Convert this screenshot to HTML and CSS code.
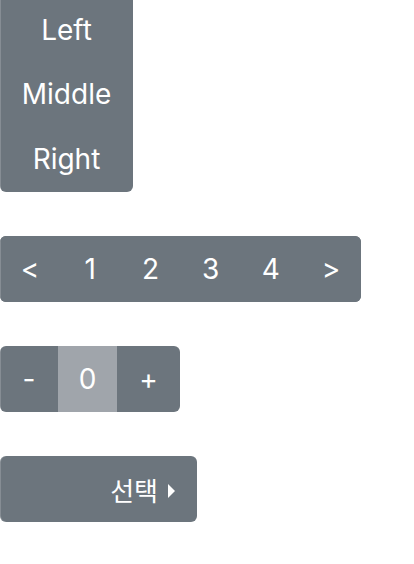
FILE: index.html
```html
<!DOCTYPE html>
<html lang="ko">
<head>
<meta charset="utf-8">
<title>Buttons</title>
<link rel="stylesheet" href="styles.css">
</head>
<body>
<main class="page">
  <div class="vgroup">
    <button class="btn vbtn">Left</button>
    <button class="btn vbtn">Middle</button>
    <button class="btn vbtn">Right</button>
  </div>

  <div class="pager">
    <button class="btn pbtn">&lt;</button>
    <button class="btn pbtn">1</button>
    <button class="btn pbtn">2</button>
    <button class="btn pbtn">3</button>
    <button class="btn pbtn">4</button>
    <button class="btn pbtn">&gt;</button>
  </div>

  <div class="counter">
    <button class="btn cbtn">-</button>
    <span class="cvalue">0</span>
    <button class="btn cbtn">+</button>
  </div>

  <button class="btn select">
    <span class="select-label">선택</span>
    <span class="caret"></span>
  </button>
</main>
</body>
</html>
```

FILE: styles.css
```css
html, body {
  margin: 0;
  padding: 0;
  background: #ffffff;
}

body {
  font-family: Inter, "Noto Sans CJK KR", sans-serif;
  color: #ffffff;
}

.page {
  display: flex;
  flex-direction: column;
  align-items: flex-start;
  gap: 44px;
  margin-top: -3.2px;
}

.btn {
  font-family: Inter, "Noto Sans CJK KR", sans-serif;
  font-size: 28px;
  font-weight: 400;
  color: #ffffff;
  background: #6c757d;
  border: none;
  margin: 0;
  padding: 0;
  display: flex;
  align-items: center;
  justify-content: center;
  box-shadow: inset 1px 0 0 rgba(255, 255, 255, 0.18);
}

.vgroup {
  display: flex;
  flex-direction: column;
  width: 133px;
  border-radius: 0 0 6px 6px;
  overflow: hidden;
}

.vbtn {
  height: 66px;
  width: 100%;
}

.vbtn + .vbtn {
  margin-top: -1.4px;
}

.pager {
  display: grid;
  grid-template-columns: repeat(6, 1fr);
  width: 361px;
  height: 66px;
  border-radius: 6px;
  overflow: hidden;
  background: #6c757d;
}

.pbtn {
  height: 66px;
  box-shadow: none;
}

.pbtn:first-child {
  box-shadow: inset 1px 0 0 rgba(255, 255, 255, 0.18);
}

.counter {
  display: grid;
  grid-template-columns: 58px 59px 63px;
  height: 66px;
  border-radius: 6px;
  overflow: hidden;
}

.cbtn {
  height: 66px;
}

.cbtn:last-child {
  box-shadow: none;
}

.cvalue {
  display: flex;
  align-items: center;
  justify-content: center;
  background: #a0a5ab;
  font-size: 28px;
}

.select {
  width: 197px;
  height: 66px;
  border-radius: 6px;
  justify-content: flex-end;
  padding-right: 22px;
  gap: 10px;
}

.select-label {
  font-size: 26px;
}

.caret {
  width: 0;
  height: 0;
  border-top: 7px solid transparent;
  border-bottom: 7px solid transparent;
  border-left: 7px solid #ffffff;
  margin-top: 3px;
}
```
